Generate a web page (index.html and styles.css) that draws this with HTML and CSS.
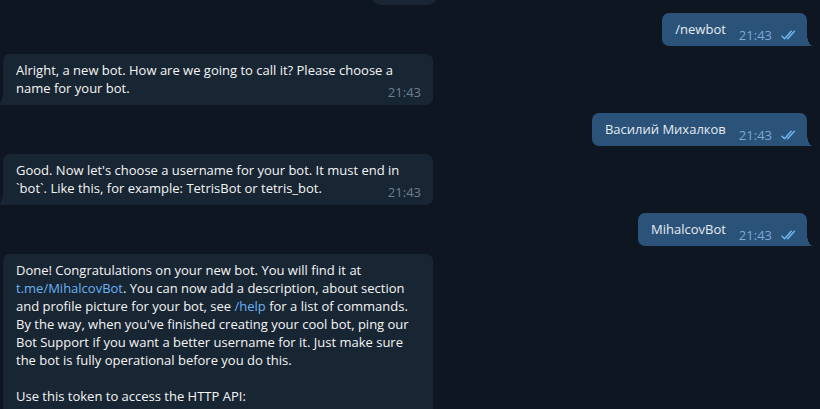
FILE: index.html
```html
<!DOCTYPE html>
<html>
<head>
<meta charset="utf-8">
<link rel="stylesheet" href="styles.css">
</head>
<body>
<div class="chat">
  <div class="pill"></div>

  <div class="row out">
    <div class="bubble out-bubble">
      <span class="text">/newbot</span>
      <span class="meta"><span class="time">21:43</span><svg class="check" viewBox="0 0 18 10" width="18" height="10"><path d="M1 6.2 L3.6 8.8 L10.2 1.2 M6.6 8.8 L13.4 1.2" fill="none" stroke="currentColor" stroke-width="1.5" stroke-linecap="round" stroke-linejoin="round"/></svg></span>
    </div>
  </div>

  <div class="row in">
    <div class="bubble in-bubble">
      <p class="text">Alright, a new bot. How are we going to call it? Please choose a name for your bot.</p>
      <span class="meta"><span class="time">21:43</span></span>
    </div>
  </div>

  <div class="row out">
    <div class="bubble out-bubble">
      <span class="text">Василий Михалков</span>
      <span class="meta"><span class="time">21:43</span><svg class="check" viewBox="0 0 18 10" width="18" height="10"><path d="M1 6.2 L3.6 8.8 L10.2 1.2 M6.6 8.8 L13.4 1.2" fill="none" stroke="currentColor" stroke-width="1.5" stroke-linecap="round" stroke-linejoin="round"/></svg></span>
    </div>
  </div>

  <div class="row in">
    <div class="bubble in-bubble">
      <p class="text">Good. Now let's choose a username for your bot. It must end in `bot`. Like this, for example: TetrisBot or tetris_bot.</p>
      <span class="meta"><span class="time">21:43</span></span>
    </div>
  </div>

  <div class="row out">
    <div class="bubble out-bubble">
      <span class="text">MihalcovBot</span>
      <span class="meta"><span class="time">21:43</span><svg class="check" viewBox="0 0 18 10" width="18" height="10"><path d="M1 6.2 L3.6 8.8 L10.2 1.2 M6.6 8.8 L13.4 1.2" fill="none" stroke="currentColor" stroke-width="1.5" stroke-linecap="round" stroke-linejoin="round"/></svg></span>
    </div>
  </div>

  <div class="row in">
    <div class="bubble in-bubble long">
      <p class="text">Done! Congratulations on your new bot. You will find it at <span class="link">t.me/MihalcovBot</span>. You can now add a description, about section and profile picture for your bot, see <span class="link">/help</span> for a list of commands. By the way, when you've finished creating your cool bot, ping our Bot Support if you want a better username for it. Just make sure the bot is fully operational before you do this.<br><br>Use this token to access the HTTP API:</p>
    </div>
  </div>
</div>
</body>
</html>
```

FILE: styles.css
```css
html, body {
  margin: 0;
  padding: 0;
  background: #0e1621;
  overflow: hidden;
  height: 409px;
}

body {
  font-family: "Open Sans", "Noto Sans", sans-serif;
  font-size: 13px;
  color: #f5f5f5;
}

.chat {
  display: flex;
  flex-direction: column;
  gap: 8px;
  margin-top: -19px;
  padding: 0 13px 0 3px;
}

.pill {
  width: 65px;
  height: 24px;
  margin-left: 369px;
  background: #1a2634;
  border-radius: 9px;
}

.row {
  display: flex;
}

.row.out {
  justify-content: flex-end;
}

.row.in {
  justify-content: flex-start;
}

.bubble {
  position: relative;
  box-sizing: border-box;
  line-height: 18px;
}

.out-bubble {
  display: flex;
  align-items: flex-end;
  background: #2b5278;
  color: #e4ecf2;
  border-radius: 7px 7px 0 7px;
  padding: 7px 8px 8px 13px;
}

.out-bubble::after {
  content: "";
  position: absolute;
  right: -6px;
  bottom: 0;
  width: 6px;
  height: 12px;
  background: radial-gradient(ellipse 6px 12px at 100% 0, transparent 97%, #2b5278 100%);
}

.in-bubble {
  display: grid;
  width: 430px;
  background: #182533;
  border-radius: 7px 7px 7px 0;
  padding: 7px 12px 8px 13px;
}

.in-bubble.long {
  padding-bottom: 40px;
}

.in-bubble::after {
  content: "";
  position: absolute;
  left: -6px;
  bottom: 0;
  width: 6px;
  height: 12px;
  background: radial-gradient(ellipse 6px 12px at 0 0, transparent 97%, #182533 100%);
}

.in-bubble .text {
  grid-area: 1 / 1;
  margin: 0 -2px 0 0;
}

.in-bubble .meta {
  grid-area: 1 / 1;
  justify-self: end;
  align-self: end;
  margin-bottom: -4px;
}

.out-bubble .meta {
  display: flex;
  align-items: center;
  margin-left: 13px;
  margin-bottom: -4px;
}

.time {
  font-size: 13px;
  line-height: 14px;
}

.in-bubble .time {
  color: #6d7f8f;
}

.out-bubble .time {
  color: #7da8d3;
}

.check {
  display: block;
  margin-left: 9px;
  color: #6fb5f0;
}

.link {
  color: #6ab2f2;
}
```
